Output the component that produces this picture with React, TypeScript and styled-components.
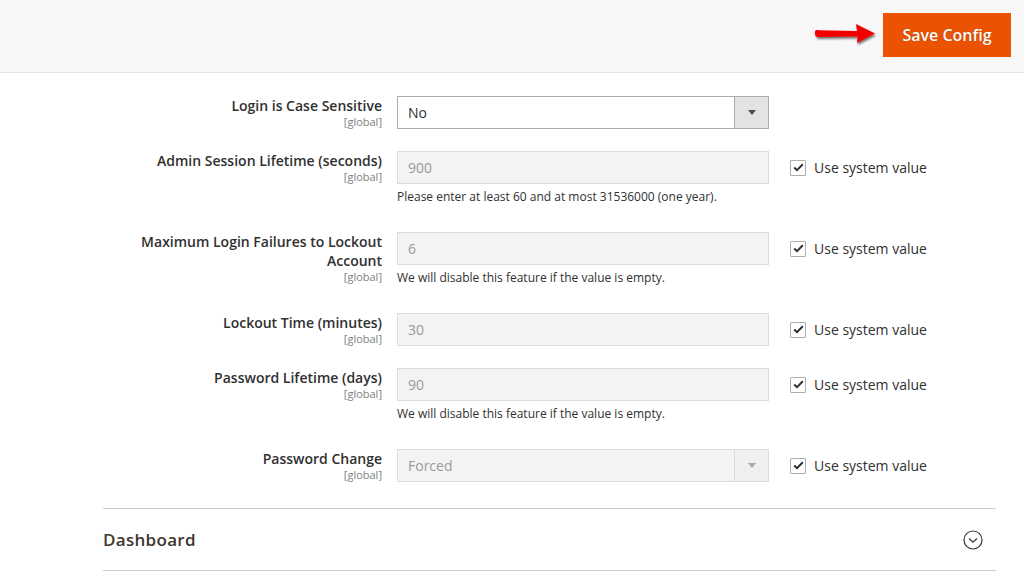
import React from "react";
import styled, { createGlobalStyle } from "styled-components";

const GlobalStyle = createGlobalStyle`
  html, body {
    margin: 0;
    padding: 0;
    background: #ffffff;
    font-family: "Open Sans", "Liberation Sans", sans-serif;
    color: #303030;
  }
`;

const Page = styled.div`
  width: 1024px;
  height: 576px;
  overflow: hidden;
`;

const Header = styled.div`
  height: 73px;
  box-sizing: border-box;
  background: #f8f8f8;
  border-bottom: 1px solid #e3e3e3;
  display: flex;
  align-items: flex-start;
  justify-content: flex-end;
  padding: 13px 13px 0 0;
`;

const ArrowWrap = styled.div`
  width: 66px;
  height: 24px;
  margin: 10px 4px 0 0;
`;

const SaveButton = styled.button`
  width: 128px;
  height: 44px;
  border: none;
  border-radius: 0;
  background: #eb5202;
  color: #ffffff;
  font-family: "Open Sans", "Liberation Sans", sans-serif;
  font-size: 16px;
  font-weight: 600;
  text-shadow: 0 0 1px rgba(0, 0, 0, 0.35);
  cursor: pointer;
  padding: 0;
`;

const Content = styled.div`
  padding: 23px 28px 0 103px;
`;

const Fieldset = styled.div`
  display: flex;
  flex-direction: column;
  gap: 22px;
  padding-bottom: 26px;
  border-bottom: 1px solid #cccccc;
`;

const Row = styled.div`
  display: grid;
  grid-template-columns: 279px 372px 1fr;
  column-gap: 15px;
  align-items: start;
`;

const LabelCol = styled.div`
  text-align: right;
`;

const LabelText = styled.div`
  font-size: 14px;
  font-weight: 600;
  line-height: 19px;
  color: #303030;
`;

const Scope = styled.div`
  font-size: 11px;
  line-height: 14px;
  color: #808080;
`;

const ControlCol = styled.div`
  display: flex;
  flex-direction: column;
`;

const TextInput = styled.div<{ $disabled?: boolean }>`
  height: 33px;
  box-sizing: border-box;
  border: 1px solid ${(p) => (p.$disabled ? "#dcdcdc" : "#adadad")};
  background: ${(p) => (p.$disabled ? "#f3f3f3" : "#ffffff")};
  color: ${(p) => (p.$disabled ? "#9a9a9a" : "#303030")};
  font-size: 14px;
  line-height: 31px;
  padding-left: 10px;
  display: flex;
  justify-content: space-between;
`;

const SelectButton = styled.div<{ $disabled?: boolean }>`
  width: 33px;
  height: 31px;
  border-left: 1px solid ${(p) => (p.$disabled ? "#dcdcdc" : "#adadad")};
  background: ${(p) => (p.$disabled ? "#f0f0f0" : "#e3e3e3")};
  display: flex;
  align-items: center;
  justify-content: center;
`;

const Caret = styled.span<{ $disabled?: boolean }>`
  width: 0;
  height: 0;
  border-left: 4px solid transparent;
  border-right: 4px solid transparent;
  border-top: 5px solid ${(p) => (p.$disabled ? "#a8a8a8" : "#514943")};
`;

const Note = styled.div`
  font-size: 12px;
  line-height: 18px;
  margin-top: 4px;
  height: 22px;
  color: #303030;
`;

const SystemValue = styled.label`
  display: flex;
  align-items: center;
  gap: 8px;
  height: 33px;
  margin-left: 6px;
  font-size: 14px;
  color: #303030;
`;

const Checkbox = styled.span`
  width: 14px;
  height: 14px;
  border: 1px solid #adadad;
  border-radius: 1px;
  background: #ffffff;
  display: flex;
  align-items: center;
  justify-content: center;
`;

const Section = styled.div`
  height: 62px;
  box-sizing: border-box;
  border-bottom: 1px solid #cccccc;
  display: flex;
  align-items: center;
  justify-content: space-between;
  padding-right: 13px;
`;

const SectionTitle = styled.div`
  font-size: 17px;
  font-weight: 600;
  color: #41362f;
  letter-spacing: 0.3px;
`;

const RedArrow = () => (
  <svg width="66" height="24" viewBox="0 0 66 24">
    <defs>
      <filter id="sh" x="-20%" y="-40%" width="140%" height="180%">
        <feDropShadow dx="1" dy="2" stdDeviation="1.2" floodColor="#000" floodOpacity="0.55" />
      </filter>
    </defs>
    <path
      d="M2 9 C2 7, 4 7, 6 7.2 L44 8 L43 1 L62 10.5 L44 20 L44.5 13.5 L6 14 C3 14, 1.5 12.5, 2 9 Z"
      fill="#f20000"
      filter="url(#sh)"
    />
  </svg>
);

const Check = () => (
  <svg width="11" height="9" viewBox="0 0 11 9">
    <path d="M1.2 4.5 L4 7.2 L9.8 1.3" fill="none" stroke="#303030" strokeWidth="2" />
  </svg>
);

const ChevronCircle = () => (
  <svg width="20" height="20" viewBox="0 0 20 20">
    <circle cx="10" cy="10" r="9" fill="none" stroke="#41362f" strokeWidth="1.2" />
    <path d="M6 8.5 L10 12.2 L14 8.5" fill="none" stroke="#41362f" strokeWidth="1.3" />
  </svg>
);

type Field = {
  label: string[];
  value: string;
  select?: boolean;
  disabled: boolean;
  note?: string;
  system: boolean;
};

const fields: Field[] = [
  { label: ["Login is Case Sensitive"], value: "No", select: true, disabled: false, system: false },
  {
    label: ["Admin Session Lifetime (seconds)"],
    value: "900",
    disabled: true,
    note: "Please enter at least 60 and at most 31536000 (one year).",
    system: true,
  },
  {
    label: ["Maximum Login Failures to Lockout", "Account"],
    value: "6",
    disabled: true,
    note: "We will disable this feature if the value is empty.",
    system: true,
  },
  { label: ["Lockout Time (minutes)"], value: "30", disabled: true, system: true },
  {
    label: ["Password Lifetime (days)"],
    value: "90",
    disabled: true,
    note: "We will disable this feature if the value is empty.",
    system: true,
  },
  { label: ["Password Change"], value: "Forced", select: true, disabled: true, system: true },
];

export default function App() {
  return (
    <Page>
      <GlobalStyle />
      <Header>
        <ArrowWrap>
          <RedArrow />
        </ArrowWrap>
        <SaveButton>Save Config</SaveButton>
      </Header>
      <Content>
        <Fieldset>
          {fields.map((f) => (
            <Row key={f.label.join(" ")}>
              <LabelCol>
                {f.label.map((l) => (
                  <LabelText key={l}>{l}</LabelText>
                ))}
                <Scope>[global]</Scope>
              </LabelCol>
              <ControlCol>
                <TextInput $disabled={f.disabled}>
                  <span>{f.value}</span>
                  {f.select && (
                    <SelectButton $disabled={f.disabled}>
                      <Caret $disabled={f.disabled} />
                    </SelectButton>
                  )}
                </TextInput>
                {f.note && <Note>{f.note}</Note>}
              </ControlCol>
              <div>
                {f.system && (
                  <SystemValue>
                    <Checkbox>
                      <Check />
                    </Checkbox>
                    Use system value
                  </SystemValue>
                )}
              </div>
            </Row>
          ))}
        </Fieldset>
        <Section>
          <SectionTitle>Dashboard</SectionTitle>
          <ChevronCircle />
        </Section>
      </Content>
    </Page>
  );
}
